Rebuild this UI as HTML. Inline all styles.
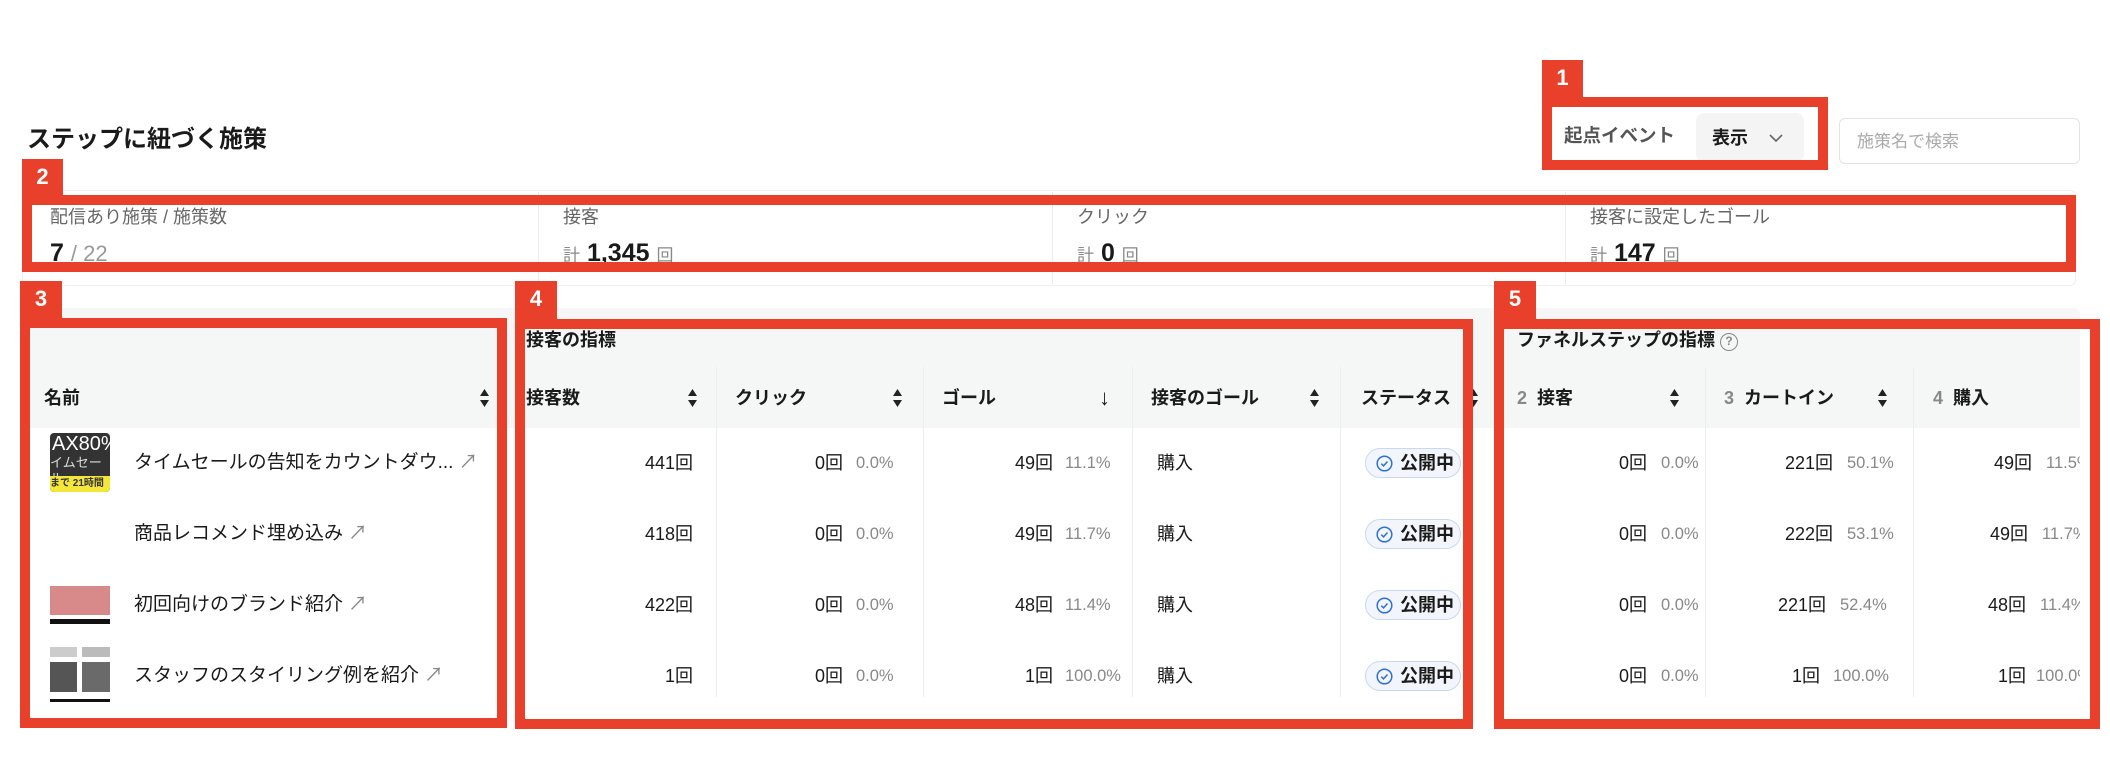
<!DOCTYPE html>
<html><head><meta charset="utf-8">
<style>
*{margin:0;padding:0;box-sizing:border-box}
body{width:2110px;height:784px;background:#fff;position:relative;overflow:hidden;font-family:"Liberation Sans","Noto Sans CJK JP",sans-serif;color:#1a1a1a}
.a{position:absolute;white-space:nowrap}
.rb{position:absolute;border:10px solid #E8402A}
.bd{position:absolute;background:#E8402A;color:#fff;font-weight:bold;font-size:22px;text-align:center;line-height:36px}
.t{font-size:18px;line-height:24px;transform:translateY(-12px)}
.p{font-size:16.5px}
.g{color:#888}
.vl{position:absolute;width:1px;background:#eceeed}
.sort{position:absolute;width:11px;height:20px;transform:translateY(-10px)}
.r{text-align:right}
.h{font-weight:bold}
.badge{position:absolute;width:96px;height:30px;border:1px solid #c9d8f0;background:#f2f6fc;border-radius:15px;font-size:18px;font-weight:bold;line-height:28px;padding-left:34px;transform:translateY(-15px)}
.badge svg{position:absolute;left:10px;top:6px}
.thumb{position:absolute;width:60px;height:59px;border-radius:4px;overflow:hidden}
</style></head><body>

<div class="a" style="left:27px;top:126px;font-size:24px;font-weight:bold;line-height:28px">ステップに紐づく施策</div>

<div class="a t g" style="left:1564px;top:136px;color:#555;font-weight:bold;font-size:18.5px">起点イベント</div>
<div class="a" style="left:1696px;top:113px;width:108px;height:49px;background:#f4f4f4;border-radius:8px"></div>
<div class="a t" style="left:1712px;top:138px;font-weight:bold">表示</div>
<svg class="a" style="left:1768px;top:132px" width="16" height="12" viewBox="0 0 16 12"><path d="M2 3l6 6 6-6" fill="none" stroke="#666" stroke-width="1.6"/></svg>
<div class="a" style="left:1839px;top:118px;width:241px;height:46px;border:1px solid #e3e3e3;border-radius:6px"></div>
<div class="a t" style="left:1857px;top:142px;color:#aaa;font-size:17px">施策名で検索</div>

<div class="a" style="left:22px;top:190px;width:2054px;height:96px;border:1px solid #eee;border-radius:6px"></div>
<div class="vl" style="left:538px;top:192px;height:92px"></div>
<div class="vl" style="left:1052px;top:192px;height:92px"></div>
<div class="vl" style="left:1565px;top:192px;height:92px"></div>
<div class="a t" style="left:50px;top:217px;color:#666">配信あり施策 / 施策数</div>
<div class="a" style="left:50px;top:238px;font-size:25px;font-weight:bold;line-height:30px">7 <span style="color:#999;font-weight:normal;font-size:22px">/ 22</span></div>
<div class="a t" style="left:563px;top:217px;color:#666">接客</div>
<div class="a" style="left:563px;top:238px;font-size:25px;font-weight:bold;line-height:30px"><span style="color:#888;font-weight:normal;font-size:17px">計</span> 1,345 <span style="color:#888;font-weight:normal;font-size:17px">回</span></div>
<div class="a t" style="left:1077px;top:217px;color:#666">クリック</div>
<div class="a" style="left:1077px;top:238px;font-size:25px;font-weight:bold;line-height:30px"><span style="color:#888;font-weight:normal;font-size:17px">計</span> 0 <span style="color:#888;font-weight:normal;font-size:17px">回</span></div>
<div class="a t" style="left:1590px;top:217px;color:#666">接客に設定したゴール</div>
<div class="a" style="left:1590px;top:238px;font-size:25px;font-weight:bold;line-height:30px"><span style="color:#888;font-weight:normal;font-size:17px">計</span> 147 <span style="color:#888;font-weight:normal;font-size:17px">回</span></div>

<div class="a" style="left:22px;top:308px;width:2058px;height:120px;background:#f5f7f6;border-radius:6px 6px 0 0"></div>
<div class="vl" style="left:716px;top:367px;height:330px"></div>
<div class="vl" style="left:923px;top:367px;height:330px"></div>
<div class="vl" style="left:1132px;top:367px;height:330px"></div>
<div class="vl" style="left:1340px;top:367px;height:330px"></div>
<div class="vl" style="left:1705px;top:367px;height:330px"></div>
<div class="vl" style="left:1913px;top:367px;height:330px"></div>

<div class="a t h" style="left:526px;top:340px">接客の指標</div>
<div class="a t h" style="left:1517px;top:340px">ファネルステップの指標 <span style="display:inline-block;width:18px;height:18px;border:1.5px solid #888;border-radius:50%;font-size:12px;line-height:15px;text-align:center;color:#888;vertical-align:1px">?</span></div>

<div class="a t h" style="left:44px;top:398px">名前</div>
<div class="a t h" style="left:526px;top:398px">接客数</div>
<div class="a t h" style="left:735px;top:398px">クリック</div>
<div class="a t h" style="left:942px;top:398px">ゴール</div>
<div class="a t" style="left:1099px;top:398px;font-size:22px">↓</div>
<div class="a t h" style="left:1151px;top:398px">接客のゴール</div>
<div class="a t h" style="left:1361px;top:398px">ステータス</div>
<div class="a t h" style="left:1517px;top:398px"><span style="color:#888">2</span>&nbsp; 接客</div>
<div class="a t h" style="left:1724px;top:398px"><span style="color:#888">3</span>&nbsp; カートイン</div>
<div class="a t h" style="left:1933px;top:398px"><span style="color:#888">4</span>&nbsp; 購入</div>

<svg class="sort" style="left:479px;top:398px" viewBox="0 0 11 20"><path d="M5.5 1L10 8H1z M5.5 19L10 12H1z" fill="#222"/></svg>
<svg class="sort" style="left:687px;top:398px" viewBox="0 0 11 20"><path d="M5.5 1L10 8H1z M5.5 19L10 12H1z" fill="#222"/></svg>
<svg class="sort" style="left:892px;top:398px" viewBox="0 0 11 20"><path d="M5.5 1L10 8H1z M5.5 19L10 12H1z" fill="#222"/></svg>
<svg class="sort" style="left:1309px;top:398px" viewBox="0 0 11 20"><path d="M5.5 1L10 8H1z M5.5 19L10 12H1z" fill="#222"/></svg>
<svg class="sort" style="left:1468px;top:398px" viewBox="0 0 11 20"><path d="M5.5 1L10 8H1z M5.5 19L10 12H1z" fill="#222"/></svg>
<svg class="sort" style="left:1669px;top:398px" viewBox="0 0 11 20"><path d="M5.5 1L10 8H1z M5.5 19L10 12H1z" fill="#222"/></svg>
<svg class="sort" style="left:1877px;top:398px" viewBox="0 0 11 20"><path d="M5.5 1L10 8H1z M5.5 19L10 12H1z" fill="#222"/></svg>

<div class="thumb" style="left:50px;top:433px;background:#333">
 <div style="color:#fff;font-size:20px;line-height:22px;margin-left:2px">AX80%</div>
 <div style="color:#ddd;font-size:13px;line-height:16px">イムセール</div>
 <div style="position:absolute;bottom:0;left:0;right:0;height:16px;background:#f5e63a;font-size:10px;font-weight:bold;color:#333;line-height:16px">まで 21時間 5</div>
</div>
<div class="thumb" style="left:50px;top:576px;height:55px;background:#fff;border-radius:0">
 <div style="margin-top:10px;height:29px;background:#d88a8a"></div>
 <div style="margin-top:4px;height:5px;background:#111"></div>
</div>
<div class="thumb" style="left:50px;top:647px;height:55px;background:#fff;border-radius:0">
 <div style="position:absolute;left:0;top:0;width:27px;height:10px;background:#ccc"></div>
 <div style="position:absolute;left:32px;top:0;width:28px;height:10px;background:#bbb"></div>
 <div style="position:absolute;left:0;top:15px;width:27px;height:30px;background:#555"></div>
 <div style="position:absolute;left:32px;top:15px;width:28px;height:30px;background:#6a6a6a"></div>
 <div style="position:absolute;left:0;bottom:0;width:60px;height:3px;background:#111"></div>
</div>

<div class="a t" style="left:134px;top:463px;font-size:19px">タイムセールの告知をカウントダウ... <span class="g">↗</span></div>
<div class="a t" style="left:134px;top:534px;font-size:19px">商品レコメンド埋め込み <span class="g">↗</span></div>
<div class="a t" style="left:134px;top:605px;font-size:19px">初回向けのブランド紹介 <span class="g">↗</span></div>
<div class="a t" style="left:134px;top:676px;font-size:19px">スタッフのスタイリング例を紹介 <span class="g">↗</span></div>

<div class="a t r" style="right:1417px;top:463px">441回</div>
<div class="a t r" style="right:1417px;top:534px">418回</div>
<div class="a t r" style="right:1417px;top:605px">422回</div>
<div class="a t r" style="right:1417px;top:676px">1回</div>

<div class="a t r" style="right:1267px;top:463px">0回</div><div class="a t g p" style="left:856px;top:463px">0.0%</div>
<div class="a t r" style="right:1267px;top:534px">0回</div><div class="a t g p" style="left:856px;top:534px">0.0%</div>
<div class="a t r" style="right:1267px;top:605px">0回</div><div class="a t g p" style="left:856px;top:605px">0.0%</div>
<div class="a t r" style="right:1267px;top:676px">0回</div><div class="a t g p" style="left:856px;top:676px">0.0%</div>

<div class="a t r" style="right:1057px;top:463px">49回</div><div class="a t g p" style="left:1065px;top:463px">11.1%</div>
<div class="a t r" style="right:1057px;top:534px">49回</div><div class="a t g p" style="left:1065px;top:534px">11.7%</div>
<div class="a t r" style="right:1057px;top:605px">48回</div><div class="a t g p" style="left:1065px;top:605px">11.4%</div>
<div class="a t r" style="right:1057px;top:676px">1回</div><div class="a t g p" style="left:1065px;top:676px">100.0%</div>

<div class="a t" style="left:1157px;top:463px">購入</div>
<div class="a t" style="left:1157px;top:534px">購入</div>
<div class="a t" style="left:1157px;top:605px">購入</div>
<div class="a t" style="left:1157px;top:676px">購入</div>

<div class="badge" style="left:1365px;top:463px"><svg width="17" height="17" viewBox="0 0 17 17"><circle cx="8.5" cy="8.5" r="7.3" fill="none" stroke="#2f6fd8" stroke-width="1.5"/><path d="M5.3 8.7l2.2 2.2 4-4.4" fill="none" stroke="#2f6fd8" stroke-width="1.5"/></svg>公開中</div>
<div class="badge" style="left:1365px;top:534px"><svg width="17" height="17" viewBox="0 0 17 17"><circle cx="8.5" cy="8.5" r="7.3" fill="none" stroke="#2f6fd8" stroke-width="1.5"/><path d="M5.3 8.7l2.2 2.2 4-4.4" fill="none" stroke="#2f6fd8" stroke-width="1.5"/></svg>公開中</div>
<div class="badge" style="left:1365px;top:605px"><svg width="17" height="17" viewBox="0 0 17 17"><circle cx="8.5" cy="8.5" r="7.3" fill="none" stroke="#2f6fd8" stroke-width="1.5"/><path d="M5.3 8.7l2.2 2.2 4-4.4" fill="none" stroke="#2f6fd8" stroke-width="1.5"/></svg>公開中</div>
<div class="badge" style="left:1365px;top:676px"><svg width="17" height="17" viewBox="0 0 17 17"><circle cx="8.5" cy="8.5" r="7.3" fill="none" stroke="#2f6fd8" stroke-width="1.5"/><path d="M5.3 8.7l2.2 2.2 4-4.4" fill="none" stroke="#2f6fd8" stroke-width="1.5"/></svg>公開中</div>

<div class="a t r" style="right:463px;top:463px">0回</div><div class="a t g p" style="left:1661px;top:463px">0.0%</div>
<div class="a t r" style="right:463px;top:534px">0回</div><div class="a t g p" style="left:1661px;top:534px">0.0%</div>
<div class="a t r" style="right:463px;top:605px">0回</div><div class="a t g p" style="left:1661px;top:605px">0.0%</div>
<div class="a t r" style="right:463px;top:676px">0回</div><div class="a t g p" style="left:1661px;top:676px">0.0%</div>

<div class="a t r" style="right:277px;top:463px">221回</div><div class="a t g p" style="left:1847px;top:463px">50.1%</div>
<div class="a t r" style="right:277px;top:534px">222回</div><div class="a t g p" style="left:1847px;top:534px">53.1%</div>
<div class="a t r" style="right:284px;top:605px">221回</div><div class="a t g p" style="left:1840px;top:605px">52.4%</div>
<div class="a t r" style="right:290px;top:676px">1回</div><div class="a t g p" style="left:1833px;top:676px">100.0%</div>

<div style="position:absolute;left:1914px;top:440px;width:166px;height:260px;overflow:hidden">
<div class="a t r" style="right:48px;top:23px">49回</div><div class="a t g p" style="left:132px;top:23px">11.5%</div>
<div class="a t r" style="right:52px;top:94px">49回</div><div class="a t g p" style="left:128px;top:94px">11.7%</div>
<div class="a t r" style="right:54px;top:165px">48回</div><div class="a t g p" style="left:126px;top:165px">11.4%</div>
<div class="a t r" style="right:54px;top:236px">1回</div><div class="a t g p" style="left:122px;top:236px">100.0%</div>
</div>

<div class="rb" style="left:1542px;top:97px;width:286px;height:73px"></div>
<div class="bd" style="left:1542px;top:60px;width:41px;height:38px">1</div>
<div class="rb" style="left:22px;top:195px;width:2054px;height:77px"></div>
<div class="bd" style="left:22px;top:159px;width:41px;height:37px">2</div>
<div class="rb" style="left:20px;top:318px;width:487px;height:410px"></div>
<div class="bd" style="left:20px;top:281px;width:42px;height:38px">3</div>
<div class="rb" style="left:515px;top:319px;width:958px;height:410px"></div>
<div class="bd" style="left:515px;top:281px;width:42px;height:39px">4</div>
<div class="rb" style="left:1494px;top:319px;width:606px;height:410px"></div>
<div class="bd" style="left:1494px;top:281px;width:42px;height:39px">5</div>

</body></html>
